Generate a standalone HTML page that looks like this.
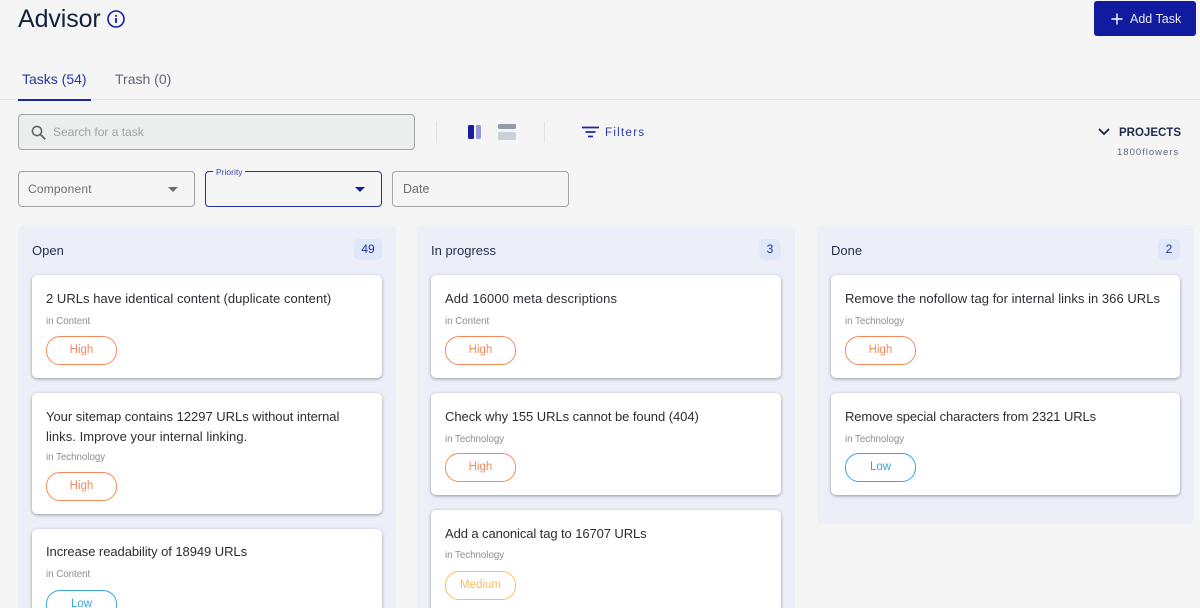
<!DOCTYPE html>
<html><head><meta charset="utf-8"><style>
html,body{margin:0;padding:0;overflow:hidden;height:608px}
body{width:1200px;background:#f5f5f5;font-family:"Liberation Sans",sans-serif;color:#24262b}
#w{position:relative;width:1200px;height:608px;overflow:hidden;background:#f5f5f5}
.a{position:absolute;white-space:nowrap}
.col{position:absolute;top:225px;width:378px;background:#eceff8;border-radius:6px;overflow:hidden}
.card{position:absolute;width:350px;background:#fff;border-radius:5px;box-shadow:0 1px 3px rgba(40,45,70,.45)}
.t{position:absolute;left:14px;font-size:13px;line-height:20px;color:#2b2d33;white-space:nowrap}
.s{position:absolute;left:14px;font-size:9.7px;line-height:12px;color:#8b8d92;white-space:nowrap;margin-top:1px}
.p{position:absolute;left:14px;width:69px;height:27px;border-radius:14px;border:1px solid;font-size:11.5px;line-height:27px;text-align:center;background:#fff}
.h{border-color:#f58a5c;color:#f58a5c}.l{border-color:#3ba4dc;color:#3ba4dc}.m{border-color:#fbbd5e;color:#fbbd5e}
.head{position:absolute;left:14px;top:16.5px;font-size:13px;line-height:18px;color:#27304f}
.n{position:absolute;right:14px;top:14px;height:21px;line-height:21px;text-align:center;background:#dfe7fb;border-radius:5px;color:#2230a8;font-size:12px}
.box{position:absolute;box-sizing:border-box;border-radius:4px;border:1px solid #a3a3a3}
</style></head><body><div id="w">
<div class="a" style="left:18px;top:3px;font-size:25px;line-height:32px;color:#14213d;letter-spacing:-.1px">Advisor</div>
<svg class="a" style="left:107px;top:10px" width="18" height="18" viewBox="0 0 18 18"><circle cx="9" cy="9" r="8" fill="none" stroke="#1320a0" stroke-width="1.6"/><rect x="8.100" y="8" width="1.800" height="5" fill="#1320a0"/><rect x="8.100" y="5" width="1.800" height="1.800" fill="#1320a0"/></svg>
<div class="a" style="left:1094px;top:1px;width:102px;height:35px;background:#101ba0;border-radius:3px"></div>
<svg class="a" style="left:1111px;top:13px" width="12" height="12" viewBox="0 0 12 12"><path d="M6 .5v11M.5 6h11" stroke="#fff" stroke-width="1.400"/></svg>
<div class="a" style="left:1130px;top:11px;font-size:12.500px;line-height:16px;color:#e6e8f8">Add Task</div>

<div class="a" style="left:22px;top:70px;font-size:14px;line-height:18px;color:#2733ad">Tasks (54)</div>
<div class="a" style="left:115px;top:70px;font-size:14px;line-height:18px;color:#5f6675">Trash (0)</div>
<div class="a" style="left:0;top:99px;width:1200px;height:1px;background:#e5e5e5"></div>
<div class="a" style="left:18px;top:99px;width:73px;height:2px;background:#1a26a3"></div>

<div class="box" style="left:18px;top:114px;width:397px;height:36px;background:#eceded"></div>
<svg class="a" style="left:31px;top:125px" width="15" height="15" viewBox="0 0 17 17"><circle cx="6.800" cy="6.800" r="5.200" fill="none" stroke="#666" stroke-width="1.800"/><path d="M10.600 10.600l5.500 5.500" stroke="#666" stroke-width="2"/></svg>
<div class="a" style="left:53px;top:125px;font-size:12px;line-height:15px;color:#a2a3a5">Search for a task</div>
<div class="a" style="left:436px;top:122px;width:1px;height:21px;background:#e3e3e3"></div>
<div class="a" style="left:544px;top:122px;width:1px;height:21px;background:#e3e3e3"></div>
<div class="a" style="left:468px;top:125px;width:6px;height:14px;background:#141fa0;border-radius:1.500px"></div>
<div class="a" style="left:476px;top:125px;width:5px;height:14px;background:#949cd8;border-radius:1.500px"></div>
<div class="a" style="left:498px;top:124px;width:18px;height:5px;background:#929ba7;border-radius:1.500px"></div>
<div class="a" style="left:498px;top:132px;width:18px;height:8px;background:#ccd1d8;border-radius:1.500px"></div>
<svg class="a" style="left:582px;top:126px" width="17" height="13" viewBox="0 0 17 13"><path d="M0 1.500h17M3.500 6h10M6 10.500h5" stroke="#1a26a3" stroke-width="1.700"/></svg>
<div class="a" style="left:605px;top:126px;font-size:11.500px;line-height:15px;letter-spacing:1.300px;color:#2b37ac">Filters</div>

<svg class="a" style="left:1098px;top:128px" width="12" height="8" viewBox="0 0 12 8"><path d="M1 1l5 5 5-5" fill="none" stroke="#14213d" stroke-width="1.800"/></svg>
<div class="a" style="left:1119px;top:126px;font-size:11.500px;line-height:15px;font-weight:bold;color:#1d2a49">PROJECTS</div>
<div class="a" style="left:1117px;top:147px;font-size:9.500px;line-height:12px;letter-spacing:1px;color:#5f6878">1800flowers</div>

<div class="box" style="left:18px;top:171px;width:177px;height:36px"></div>
<div class="a" style="left:28px;top:182px;font-size:12px;line-height:15px;letter-spacing:.2px;color:#6e6e6e">Component</div>
<div class="a" style="left:168px;top:187px;width:0;height:0;border:5px solid transparent;border-top:5px solid #6e6e6e;border-bottom:0"></div>
<div class="box" style="left:205px;top:171px;width:177px;height:36px;border-color:#2330a8"></div>
<div class="a" style="left:213px;top:167px;padding:0 3px;background:#f5f5f5;font-size:8.500px;line-height:11px;color:#3a46b4">Priority</div>
<div class="a" style="left:355px;top:187px;width:0;height:0;border:5px solid transparent;border-top:5px solid #141fa0;border-bottom:0"></div>
<div class="box" style="left:392px;top:171px;width:177px;height:36px"></div>
<div class="a" style="left:403px;top:182px;font-size:12.500px;line-height:15px;color:#6e6e6e">Date</div>

<div class="col" style="left:18px;height:383px;border-radius:6px 6px 0 0">
<div class="head">Open</div><div class="n" style="width:28px">49</div>
<div class="card" style="left:14px;top:50px;height:103px"><div class="t" style="top:14px;letter-spacing:.04px">2 URLs have identical content (duplicate content)</div><div class="s" style="top:40px">in Content</div><div class="p h" style="top:61px">High</div></div>
<div class="card" style="left:14px;top:168px;height:121px"><div class="t" style="top:14px"><span style="letter-spacing:-.02px">Your sitemap contains 12297 URLs without internal</span><br><span style="letter-spacing:.05px">links. Improve your internal linking.</span></div><div class="s" style="top:58px">in Technology</div><div class="p h" style="top:79px">High</div></div>
<div class="card" style="left:14px;top:304px;height:79px;border-radius:5px 5px 0 0"><div class="t" style="top:13px;letter-spacing:-.06px">Increase readability of 18949 URLs</div><div class="s" style="top:39px">in Content</div><div style="position:absolute;left:0;top:61px;width:100%;height:18px;overflow:hidden"><div class="p l" style="top:0">Low</div></div></div>
</div>

<div class="col" style="left:417px;height:383px;border-radius:6px 6px 0 0">
<div class="head">In progress</div><div class="n" style="width:22px">3</div>
<div class="card" style="left:14px;top:50px;height:103px"><div class="t" style="top:14px;letter-spacing:.14px">Add 16000 meta descriptions</div><div class="s" style="top:40px">in Content</div><div class="p h" style="top:61px">High</div></div>
<div class="card" style="left:14px;top:168px;height:102px"><div class="t" style="top:14px;letter-spacing:-.05px">Check why 155 URLs cannot be found (404)</div><div class="s" style="top:40px">in Technology</div><div class="p h" style="top:60px">High</div></div>
<div class="card" style="left:14px;top:285px;height:98px;border-radius:5px 5px 0 0"><div class="t" style="top:14px;letter-spacing:-.09px">Add a canonical tag to 16707 URLs</div><div class="s" style="top:39px">in Technology</div><div class="p m" style="top:61px">Medium</div></div>
</div>

<div class="col" style="left:817px;width:377px;height:299px">
<div class="head">Done</div><div class="n" style="width:22px">2</div>
<div class="card" style="left:14px;top:50px;width:349px;height:103px"><div class="t" style="top:14px;letter-spacing:.04px">Remove the nofollow tag for internal links in 366 URLs</div><div class="s" style="top:40px">in Technology</div><div class="p h" style="top:61px">High</div></div>
<div class="card" style="left:14px;top:168px;width:349px;height:102px"><div class="t" style="top:14px;letter-spacing:-.1px">Remove special characters from 2321 URLs</div><div class="s" style="top:40px">in Technology</div><div class="p l" style="top:60px">Low</div></div>
</div>
</div></body></html>
